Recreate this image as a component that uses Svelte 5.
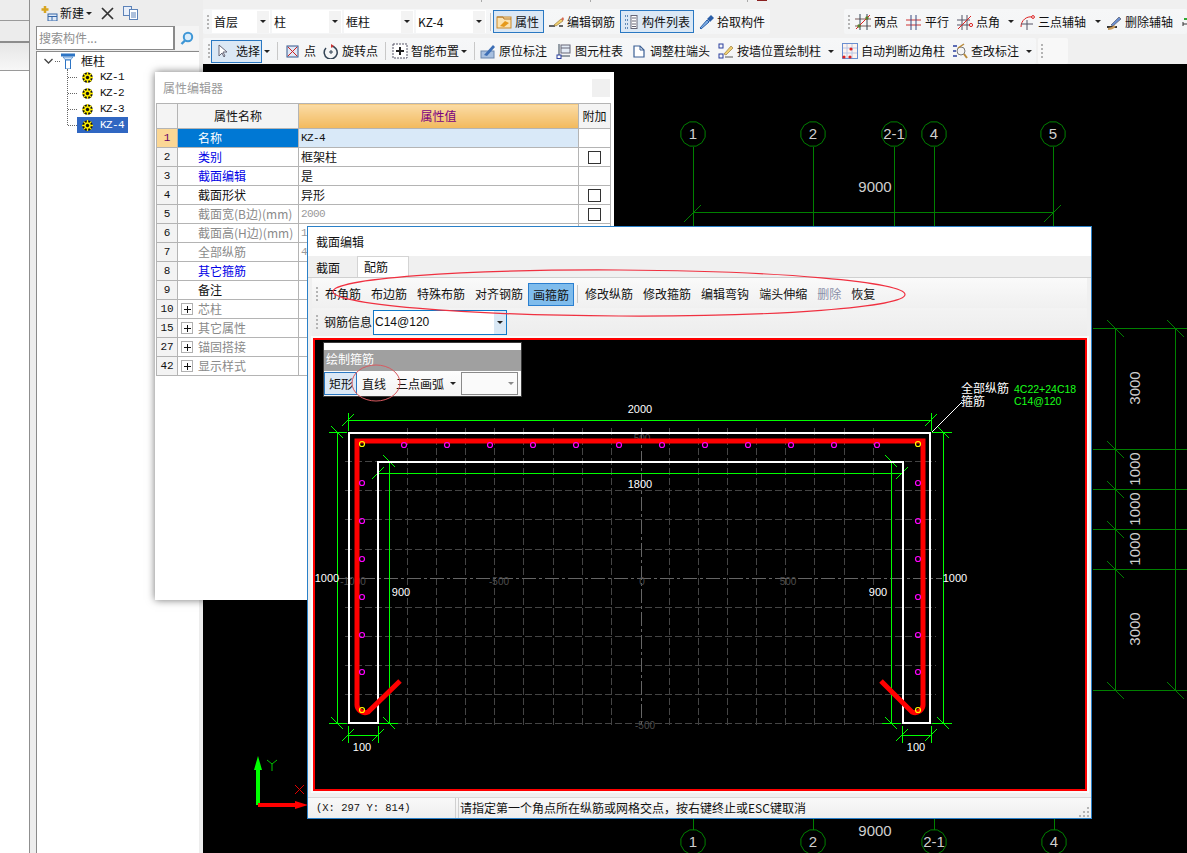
<script>
  const combos = [
    { t: '首层', w: 58 }, { t: '柱', w: 70 }, { t: '框柱', w: 70 }, { t: 'KZ-4', w: 70 }
  ];
  const row1a = [
    { i: 'prop', t: '属性', w: 51, on: true, ml: -1 },
    { i: 'edit', t: '编辑钢筋', w: 70, ml: 2 },
    { i: 'list', t: '构件列表', w: 74, on: true, ml: 4 },
    { i: 'pick', t: '拾取构件', w: 71, ml: 2 }
  ];
  const row1b = [
    { i: 'two', t: '两点', w: 51 },
    { i: 'par', t: '平行', w: 51 },
    { i: 'ang', t: '点角', w: 62, a: 1 },
    { i: 'arc', t: '三点辅轴', w: 87, a: 1 },
    { i: 'del', t: '删除辅轴', w: 76 },
    { i: 'dim', t: '', w: 12 }
  ];
  const row2 = [
    { i: 'pt', t: '点', w: 37, ml: 2 },
    { i: 'rot', t: '旋转点', w: 60, ml: 1 },
    { s: 1 },
    { i: 'smart', t: '智能布置', w: 80, a: 1, ml: 1 },
    { s: 1 },
    { i: 'orig', t: '原位标注', w: 73, ml: 0 },
    { i: 'tbl', t: '图元柱表', w: 72, ml: 3 },
    { i: 'adj', t: '调整柱端头', w: 84, ml: 3 },
    { i: 'wall', t: '按墙位置绘制柱', w: 121, a: 1, ml: 3 },
    { i: 'auto', t: '自动判断边角柱', w: 110, ml: 3 },
    { i: 'chk', t: '查改标注', w: 85, a: 1, ml: 0 }
  ];
  const rows = [
    { n: '1', name: '名称', val: 'KZ-4', cls: 'k', sel: true, mono: true },
    { n: '2', name: '类别', val: '框架柱', cls: 'b', box: true },
    { n: '3', name: '截面编辑', val: '是', cls: 'b' },
    { n: '4', name: '截面形状', val: '异形', cls: 'k', box: true },
    { n: '5', name: '截面宽(B边)(mm)', val: '2000', cls: 'g', box: true, small: true },
    { n: '6', name: '截面高(H边)(mm)', val: '1000', cls: 'g', box: true, small: true },
    { n: '7', name: '全部纵筋', val: '4C22+24C18', cls: 'g', small: true },
    { n: '8', name: '其它箍筋', val: '', cls: 'b' },
    { n: '9', name: '备注', val: '', cls: 'k' },
    { n: '10', name: '芯柱', val: '', cls: 'g', plus: true },
    { n: '15', name: '其它属性', val: '', cls: 'g', plus: true },
    { n: '27', name: '锚固搭接', val: '', cls: 'g', plus: true },
    { n: '42', name: '显示样式', val: '', cls: 'g', plus: true }
  ];
  const tree = ['KZ-1', 'KZ-2', 'KZ-3', 'KZ-4'];
  const dlgTools = ['布角筋', '布边筋', '特殊布筋', '对齐钢筋'];
  const dlgTools2 = ['修改纵筋', '修改箍筋', '编辑弯钩', '端头伸缩'];

  // background CAD drawing
  const axesTop = [[693, '1'], [813, '2'], [894, '2-1'], [934, '4'], [1053, '5']];
  const axesBot = [[693, '1'], [813, '2'], [934, '2-1'], [1054, '4']];
  const ring = (cx, cy, r) => {
    const p = [];
    for (let i = 0; i < 12; i++) {
      const a = Math.PI / 12 + (i * Math.PI) / 6;
      p.push((cx + r * Math.cos(a)).toFixed(1) + ',' + (cy + r * Math.sin(a)).toFixed(1));
    }
    return p.join(' ');
  };
  const sideY = [328, 449, 489, 529, 569, 690];
  const sideDims = [['3000', 388], ['1000', 469], ['1000', 509], ['1000', 549], ['3000', 629]];

  // section drawing
  const gridV = [];
  for (let x = 407; x <= 875; x += 29.1) if (Math.abs(x - 640) > 8) gridV.push(Math.round(x));
  const gridH = [461, 490, 519, 549, 607, 636, 665, 694, 723];
  const magTop = [404, 447, 490, 533, 576, 619, 662, 705, 748, 791, 834, 877];
  const magSide = [483, 521, 559, 597, 635, 672];
  const yellow = [[362, 444], [918, 444], [362, 710], [918, 710]];
  const dims = [
    [348, 420, 931, 420], [348, 413, 348, 431], [931, 413, 931, 431],
    [337, 432, 337, 723], [329, 432, 347, 432], [329, 723, 347, 723],
    [943, 432, 943, 723], [932, 432, 952, 432], [932, 723, 952, 723],
    [378, 473, 902, 473], [378, 462, 378, 481], [902, 462, 902, 481],
    [389, 461, 389, 723], [379, 461, 398, 461], [379, 723, 398, 723],
    [891, 461, 891, 723], [882, 461, 901, 461], [882, 723, 901, 723],
    [348, 735, 378, 735], [348, 726, 348, 743], [378, 726, 378, 743],
    [902, 735, 931, 735], [902, 726, 902, 743], [931, 726, 931, 743]
  ];
  const slashes = [[348, 420], [931, 420], [378, 473], [902, 473], [348, 735], [378, 735], [902, 735], [931, 735]];
  const backs = [[337, 432], [943, 432], [337, 723], [943, 723], [389, 461], [891, 461], [389, 723], [891, 723]];
  const dimText = [
    ['2000', 640, 413], ['1800', 640, 488], ['900', 401, 596], ['900', 878, 596],
    ['1000', 327, 582], ['1000', 955, 582], ['100', 362, 751], ['100', 916, 751]
  ];
  const axisText = [
    ['-1000', 353, 585], ['-500', 499, 585], ['0', 642, 585], ['500', 788, 585],
    ['500', 642, 442], ['-500', 645, 729]
  ];
</script>

{#snippet ico(n)}
  <svg class="ic" width="16" height="16" viewBox="0 0 16 16">
    {#if n === 'prop'}
      <rect x="1" y="3" width="14" height="11" fill="#fbe3b0" stroke="#c98a2e" />
      <path d="M1 3h6l1 2h7" fill="none" stroke="#b5782b" />
      <path d="M4 12l5-5 4 2-5 4z" fill="#e59a1c" />
    {:else if n === 'edit'}
      <path d="M1 12h6M11 12h4" stroke="#333" stroke-width="1.4" />
      <path d="M6 11l7-6 2 2-7 5z" fill="#f0d070" stroke="#8a6a2a" stroke-width=".6" />
      <path d="M13 5l2-2 1 2-1 2z" fill="#d86a50" />
    {:else if n === 'list'}
      <path d="M2 2h3M2 6h3M2 10h3M2 14h3" stroke="#3a6ea5" stroke-width="1.4" stroke-dasharray="1 1" />
      <rect x="8" y="1.5" width="6" height="13" fill="#fff" stroke="#667" />
      <path d="M9 4h4M9 7h4M9 10h4M9 12.500h4" stroke="#667" />
    {:else if n === 'pick'}
      <path d="M2 14l7-8 2 2-8 7z" fill="#7fb0e6" stroke="#2a5ea8" />
      <path d="M9 5l4-4 3 3-4 4z" fill="#2a5ea8" />
    {:else if n === 'two'}
      <path d="M0 5h16M0 12h16" stroke="#7a5a5a" /><path d="M5 0v16M12 0v16" stroke="#345" />
      <path d="M1 15L15 1" stroke="#d22" /><circle cx="4" cy="12" r="1.700" fill="#5a7d2a" /><circle cx="12" cy="4" r="1.700" fill="#5a7d2a" />
    {:else if n === 'par'}
      <path d="M0 6h15M0 11h15" stroke="#c33" /><path d="M5 1v15M10 1v15" stroke="#3a4a80" />
    {:else if n === 'ang'}
      <path d="M0 6h13M0 11h13" stroke="#556" /><path d="M5 1v15M10 1v15" stroke="#556" />
      <path d="M1 15L14 2" stroke="#d22" /><circle cx="14" cy="11" r="1.600" fill="none" stroke="#d22" />
    {:else if n === 'arc'}
      <path d="M2 13C2 6 8 2 13 3" fill="none" stroke="#d22" /><path d="M8 6v10M2 10h12" stroke="#556" />
      <circle cx="14" cy="3" r="1.400" fill="none" stroke="#d22" />
    {:else if n === 'del'}
      <path d="M1 13h10" stroke="#333" stroke-width="2" /><path d="M5 11l8-8 2 2-8 7z" fill="#6a8fd0" stroke="#445" stroke-width=".6" />
      <path d="M2 15c3 0 5-1 7-3" stroke="#c79a5a" stroke-width="2" fill="none" />
    {:else if n === 'dim'}
      <path d="M2 5h4" stroke="#3a3" stroke-width="2" /><path d="M1 10h7M1 8v4M8 8v4" stroke="#333" />
    {:else if n === 'sel'}
      <path d="M5 2v11l3-3 2 4 1-1-2-4h4z" fill="#fff" stroke="#667" />
    {:else if n === 'pt'}
      <rect x="2" y="3" width="11" height="11" fill="#dfe8f6" stroke="#34568c" />
      <path d="M3 4l9 9M12 4l-9 9" stroke="#c22" />
    {:else if n === 'rot'}
      <path d="M3 5a6.500 6.500 0 1 0 5-2" fill="none" stroke="#345" stroke-width="1.500" />
      <path d="M8 1v4l3-2z" fill="#c33" /><path d="M6 9h4M8 7v4" stroke="#345" />
    {:else if n === 'smart'}
      <rect x="1" y="1" width="14" height="14" fill="#fff" stroke="#556" stroke-dasharray="2 1" />
      <path d="M4 8h8M8 4v8" stroke="#222" stroke-width="2" />
    {:else if n === 'orig'}
      <rect x="1" y="8" width="13" height="7" fill="#a8c0e0" stroke="#6a86ad" />
      <path d="M4 12L13 2l2 2-8 9z" fill="#3d6eb5" />
    {:else if n === 'tbl'}
      <path d="M3 1v12h11" fill="none" stroke="#345" /><rect x="5" y="2" width="9" height="8" fill="#e4ecf7" stroke="#667" />
      <path d="M5 5h9" stroke="#667" /><rect x="1" y="12" width="4" height="3.500" fill="#fff" stroke="#2a3f9e" />
    {:else if n === 'adj'}
      <path d="M3 3h6l4 4v7H3z" fill="#fff" stroke="#3a5f94" stroke-width="1.200" /><path d="M9 3v4h4" fill="none" stroke="#3a5f94" />
    {:else if n === 'wall'}
      <rect x="1" y="1" width="4" height="4" fill="none" stroke="#2a3f9e" /><rect x="1" y="11" width="4" height="4" fill="none" stroke="#2a3f9e" />
      <path d="M7 14h8" stroke="#555" /><path d="M6 11l7-8 2 2-7 7z" fill="#f0d070" stroke="#8a6a2a" stroke-width=".6" />
    {:else if n === 'auto'}
      <rect x=".5" y=".5" width="15" height="15" fill="#fdf3ee" stroke="#6a8fd0" />
      <path d="M5 1v14M10 1v14M1 5h14M10 1v0M1 10h14" stroke="#b9c6e6" />
      <circle cx="2" cy="14" r="1.600" fill="#d22" /><circle cx="8" cy="14" r="1.600" fill="#d22" /><circle cx="9" cy="6" r="1.600" fill="#d22" />
    {:else if n === 'chk'}
      <path d="M1 3h4M1 8h3M1 13h4" stroke="#2a3f9e" stroke-width="1.500" />
      <circle cx="9" cy="8" r="4" fill="#f4f4f4" stroke="#777" /><path d="M12 11l3 4" stroke="#b98a3a" stroke-width="2" />
      <path d="M6 5l6-4" stroke="#b98a3a" stroke-width="1.500" />
    {/if}
  </svg>
{/snippet}

{#snippet gear()}
  <svg class="gear" width="11" height="11" viewBox="0 0 11 11">
    <circle cx="5.500" cy="5.500" r="5.200" fill="#111" />
    <path d="M5.500 0v11M0 5.500h11M1.600 1.600l7.800 7.800M9.400 1.600l-7.800 7.800" stroke="#ffee00" stroke-width="1.300" />
    <circle cx="5.500" cy="5.500" r="3.200" fill="#ffee00" />
    <circle cx="5.500" cy="5.500" r="1.700" fill="#111" />
  </svg>
{/snippet}

{#snippet arrow()}<i class="caret"></i>{/snippet}

{#snippet tool(it)}
  <div class="tool" class:on={it.on} style="width:{it.w}px;margin-left:{it.ml ?? 0}px">
    {@render ico(it.i)}
    {#if it.t}<span>{it.t}</span>{/if}
    {#if it.a}<span class="tool-caret">{@render arrow()}</span>{/if}
  </div>
{/snippet}

<div class="app">
  <aside class="nav">
    <div class="nav-a"></div>
    <div class="nav-b"></div>
    <div class="nav-c"></div>
    <div class="nav-d"></div>
  </aside>

  <section class="side">
    <div class="side-bar">
      <svg width="17" height="15" viewBox="0 0 17 15">
        <path d="M4 0v7M0.500 3.500h7" stroke="#d8a520" stroke-width="2.500" />
        <rect x="7" y="8" width="9" height="7" fill="#dfe9f6" stroke="#3566a8" />
        <path d="M7 10.500h9M11 10.500v4" stroke="#3566a8" />
      </svg>
      <span>新建</span>{@render arrow()}
      <svg class="x" width="13" height="13" viewBox="0 0 13 13"><path d="M1 1l11 11M12 1L1 12" stroke="#333" stroke-width="1.700" /></svg>
      <svg class="copy" width="15" height="14" viewBox="0 0 15 14">
        <rect x=".5" y=".5" width="8" height="9" fill="#e8effa" stroke="#5c82b8" />
        <rect x="6.500" y="3.500" width="8" height="10" fill="#fff" stroke="#5c82b8" />
        <path d="M8 7h5M8 9h5M8 11h5" stroke="#5c82b8" />
      </svg>
    </div>
    <div class="search">
      <div class="search-in">搜索构件...</div>
      <div class="search-btn">
        <svg width="14" height="14" viewBox="0 0 14 14"><circle cx="8" cy="6" r="4.200" fill="#d9ecfb" stroke="#3f97d6" stroke-width="2" /><path d="M5 9.500L1.500 13" stroke="#3f97d6" stroke-width="2.400" /></svg>
      </div>
    </div>
    <div class="tree">
      <div class="tree-root">
        <svg class="chev" width="9" height="6" viewBox="0 0 9 6"><path d="M.5 1l4 4 4-4" fill="none" stroke="#444" stroke-width="1.300" /></svg>
        <i class="dot-h short"></i>
        <svg width="14" height="16" viewBox="0 0 14 16">
          <path d="M0 .5h14v3H0z" fill="#2d74c4" /><path d="M2 4h10L9.500 7h-5z" fill="#cfe2f6" stroke="#2d74c4" stroke-width=".6" />
          <rect x="4.500" y="7" width="5" height="9" fill="#fff" stroke="#2d74c4" />
        </svg>
        <span>框柱</span>
      </div>
      <div class="tree-kids">
        {#each tree as k, i}
          <div class="tree-kid"><i class="dot-h"></i>
            <div class="kid-body" class:sel={i === 3}>{@render gear()}<span>{k}</span></div>
          </div>
        {/each}
      </div>
    </div>
  </section>

  <main class="main">
    <div class="strip">
      <i class="frag f1"></i><i class="frag f2"></i><i class="frag f3"></i><i class="frag f4"></i>
    </div>
    <div class="row r1">
      <div class="seg seg-a">
        <i class="handle"></i>
        <div class="combos">
          {#each combos as c}
            <div class="combo" style="width:{c.w}px"><span>{c.t}</span><b>{@render arrow()}</b></div>
          {/each}
        </div>
        <i class="sep"></i>
        {#each row1a as it}{@render tool(it)}{/each}
      </div>
      <div class="seg seg-b">
        <i class="handle"></i>
        {#each row1b as it}{@render tool(it)}{/each}
      </div>
    </div>
    <div class="row r2">
      <div class="seg seg-c">
        <i class="handle"></i>
        <div class="tool on sel-btn">{@render ico('sel')}<span>选择</span></div>
        <span class="lone-caret">{@render arrow()}</span>
        <i class="sep"></i>
        {#each row2 as it}
          {#if it.s}<i class="sep"></i>{:else}{@render tool(it)}{/if}
        {/each}
      </div>
      <div class="seg seg-d"><i class="handle"></i></div>
    </div>
    <div class="cad">
      <svg class="cad-svg" viewBox="203 64 984 789" width="984" height="789">
        <g stroke="#008000" fill="none" shape-rendering="crispEdges">
          {#each axesTop as a}<line x1={a[0]} y1="147" x2={a[0]} y2="227" />{/each}
          <line x1="693" y1="212" x2="1053" y2="212" />
          {#each axesBot as a}<line x1={a[0]} y1="819" x2={a[0]} y2="853" />{/each}
          {#each sideY as y}<line x1="1093" y1={y} x2="1187" y2={y} />{/each}
          <line x1="1115" y1="328" x2="1115" y2="690" />
          <line x1="1175" y1="328" x2="1175" y2="690" />
        </g>
        <g stroke="#008000" fill="none">
          {#each axesTop as a}<polygon points={ring(a[0], 134, 12.5)} fill="#000" />{/each}
          {#each axesBot as a}<polygon points={ring(a[0], 842, 12.5)} fill="#000" />{/each}
          <path d="M684 222l17-17M1044 222l17-17" />
          {#each sideY as y}<path d="M1107 {y - 8}l17 17" />{/each}
          <path d="M1167 320l17 17M1167 682l17 17" />
        </g>
        <g class="cad-t">
          {#each axesTop as a}<text x={a[0]} y="139" text-anchor="middle">{a[1]}</text>{/each}
          {#each axesBot as a}<text x={a[0]} y="847" text-anchor="middle">{a[1]}</text>{/each}
          <text x="875" y="192" text-anchor="middle">9000</text>
          <text x="875" y="836" text-anchor="middle">9000</text>
          {#each sideDims as d}
            <text transform="translate(1140 {d[1]}) rotate(-90)" text-anchor="middle">{d[0]}</text>
          {/each}
        </g>
        <path d="M258 805V766" stroke="#00ff00" stroke-width="4" />
        <path d="M258 756l-4 14h8z" fill="#00ff00" />
        <path d="M258 805H296" stroke="#ff0000" stroke-width="4" />
        <path d="M295 801l13 4-13 4z" fill="#ff0000" />
        <path d="M267 760l5 4 5-4M272 764v7" stroke="#00c000" fill="none" />
        <path d="M295 785l9 9M304 785l-9 9" stroke="#e00000" />
      </svg>
    </div>
  </main>

  <div class="propwin">
    <div class="prop-title"><span>属性编辑器</span><i class="prop-x"></i></div>
    <table class="grid">
      <colgroup><col class="c0" /><col class="c1" /><col class="c2" /><col class="c3" /></colgroup>
      <thead>
        <tr><th class="idx"></th><th>属性名称</th><th class="valh">属性值</th><th>附加</th></tr>
      </thead>
      <tbody>
        {#each rows as r}
          <tr>
            <td class="idx" class:cur={r.sel}>{r.n}</td>
            <td class="name {r.cls}" class:selname={r.sel} class:withplus={r.plus}>
              {#if r.plus}<i class="plus"></i>{/if}{r.name}
            </td>
            <td class="val" class:selval={r.sel} class:mono={r.mono} class:small={r.small}>{r.val}</td>
            <td class="att">{#if r.box}<i class="check"></i>{/if}</td>
          </tr>
        {/each}
      </tbody>
    </table>
  </div>

  <div class="dlg">
    <div class="dlg-title">截面编辑</div>
    <div class="tabs">
      <div class="tab">截面</div>
      <div class="tab active">配筋</div>
    </div>
    <div class="dlg-tools t1">
      <i class="handle"></i>
      {#each dlgTools as t}<span class="dt">{t}</span>{/each}
      <span class="dt pressed">画箍筋</span>
      <i class="sep"></i>
      {#each dlgTools2 as t}<span class="dt">{t}</span>{/each}
      <span class="dt dis">删除</span>
      <span class="dt">恢复</span>
    </div>
    <div class="dlg-tools t2">
      <i class="handle"></i>
      <span class="dt">钢筋信息</span>
      <div class="rebar"><span>C14@120</span><b>{@render arrow()}</b></div>
    </div>
    <div class="sec">
      <svg class="sec-svg" viewBox="315 340 770 449" width="770" height="449">
        <g shape-rendering="crispEdges">
          <g stroke="#444" stroke-dasharray="7 3" fill="none">
            {#each gridV as x}<line x1={x} y1="428" x2={x} y2="727" />{/each}
            {#each gridH as y}<line x1="345" y1={y} x2="936" y2={y} />{/each}
          </g>
          <g stroke="#666" stroke-dasharray="14 3 3 3" fill="none">
            <line x1="641" y1="428" x2="641" y2="727" />
            <line x1="338" y1="578" x2="942" y2="578" />
          </g>
        </g>
        <g class="ax">
          {#each axisText as t}<text x={t[1]} y={t[2]} text-anchor="middle">{t[0]}</text>{/each}
        </g>
        <g stroke="#00ff00" fill="none" shape-rendering="crispEdges">
          {#each dims as d}<line x1={d[0]} y1={d[1]} x2={d[2]} y2={d[3]} />{/each}
        </g>
        <g stroke="#00ff00" fill="none">
          {#each slashes as s}<path d="M{s[0] - 6} {s[1] + 6}l12 -12" />{/each}
          {#each backs as s}<path d="M{s[0] - 6} {s[1] - 6}l12 12" />{/each}
        </g>
        <path d="M378 723H349V433H930V723H903V462H378z" fill="none" stroke="#fff" stroke-width="2" shape-rendering="crispEdges" />
        <path d="M400 681L368 712A8 8 0 0 1 357 704V441H923V704A8 8 0 0 1 912 712L881 681" fill="none" stroke="#ff0000" stroke-width="5" />
        <g fill="none" stroke="#ff00ff" stroke-width="1.200">
          {#each magTop as x}<circle cx={x} cy="445" r="2.500" />{/each}
          {#each magSide as y}
            <circle cx="362" cy={y} r="2.500" />
            <circle cx="918" cy={y} r="2.500" />
          {/each}
        </g>
        <g fill="none" stroke="#ffff00" stroke-width="1.200">
          {#each yellow as p}<circle cx={p[0]} cy={p[1]} r="2.500" />{/each}
        </g>
        <path d="M932 432L962 402" stroke="#fff" fill="none" />
        <g class="wt">
          {#each dimText as t}<text x={t[1]} y={t[2]} text-anchor="middle">{t[0]}</text>{/each}
          <text class="zh" x="961" y="393">全部纵筋</text>
          <text class="zh" x="961" y="406">箍筋</text>
        </g>
        <g class="gt">
          <text x="1014" y="393">4C22+24C18</text>
          <text x="1014" y="405">C14@120</text>
        </g>
      </svg>
      <div class="mini">
        <div class="mini-top"></div>
        <div class="mini-title">绘制箍筋</div>
        <div class="mini-tools">
          <span class="m-btn">矩形</span>
          <span class="m-t line">直线</span>
          <span class="m-t arc3">三点画弧</span>
          <span class="m-caret">{@render arrow()}</span>
          <div class="m-combo"><i class="caret gray"></i></div>
        </div>
      </div>
    </div>
    <div class="status">
      <div class="st-l">(X: 297 Y: 814)</div>
      <div class="st-r">请指定第一个角点所在纵筋或网格交点，按右键终止或ESC键取消
        <svg class="grip" width="11" height="11" viewBox="0 0 11 11" fill="#b5b5b5">
          <rect x="8" y="1" width="2" height="2" /><rect x="4" y="5" width="2" height="2" /><rect x="8" y="5" width="2" height="2" />
          <rect x="0" y="9" width="2" height="2" /><rect x="4" y="9" width="2" height="2" /><rect x="8" y="9" width="2" height="2" />
        </svg>
      </div>
    </div>
  </div>

  <svg class="marks" width="1187" height="853" viewBox="0 0 1187 853">
    <ellipse cx="619" cy="293" rx="286" ry="23" fill="none" stroke="#f03040" stroke-width="1.200" transform="rotate(0.300 619 293)" />
    <ellipse cx="376" cy="383" rx="24" ry="18" fill="none" stroke="#d85a60" />
  </svg>
</div>

<style>
  :global(body) {
    margin: 0;
    background: #f0f0f0;
  }
  .app {
    position: relative;
    display: flex;
    width: 1187px;
    height: 853px;
    overflow: hidden;
    background: #f0f0f0;
    font: 12px/16px "Noto Sans CJK SC", "Liberation Sans", sans-serif;
    color: #111;
  }
  i { display: block; font-style: normal; }

  /* left rail */
  .nav {
    width: 29px;
    flex: none;
    display: flex;
    flex-direction: column;
    border-right: 1px solid #8f8f8f;
    box-sizing: content-box;
  }
  .nav-a { height: 20px; background: #ededed; border-bottom: 1px solid #9a9a9a; }
  .nav-b { height: 20px; background: #ececec; border-bottom: 2px solid #8c8c8c; }
  .nav-c { height: 27px; background: linear-gradient(#e6e6e6, #f7f7f7); border-bottom: 1px solid #9a9a9a; }
  .nav-d { flex: 1; background: #fff; }

  /* tree side panel */
  .side {
    width: 173px;
    flex: none;
    box-sizing: border-box;
    padding: 0 4px 0 6px;
    display: flex;
    flex-direction: column;
    background: #ededed;
  }
  .side-bar {
    height: 26px;
    display: flex;
    align-items: center;
    padding-left: 5px;
    box-sizing: border-box;
    font-size: 12px;
    gap: 2px;
  }
  .side-bar .x { margin-left: 7px; }
  .side-bar .copy { margin-left: 7px; }
  .search { display: flex; height: 25px; }
  .search-in {
    width: 139px;
    height: 24px;
    box-sizing: border-box;
    border: 1px solid #8a8a8a;
    border-right-width: 2px;
    background: #fff;
    color: #8f8f8f;
    padding: 3px 2px;
  }
  .search-btn {
    width: 24px;
    height: 24px;
    display: flex;
    align-items: center;
    justify-content: center;
    background: #f4f4f4;
  }
  .tree {
    flex: 1;
    background: #fff;
    border-left: 1px solid #8a8a8a;
    border-top: 1px solid #8a8a8a;
    padding: 1px 0 0 7px;
  }
  .tree-root { display: flex; align-items: center; height: 16px; }
  .tree-root span { margin-left: 6px; line-height: 16px; }
  .dot-h { width: 9px; height: 0; border-top: 1px dotted #666; flex: none; }
  .dot-h.short { width: 5px; margin: 0 1px 0 2px; }
  .tree-kids { margin-left: 23px; border-left: 1px dotted #666; height: 56px; }
  .tree-kid { display: flex; align-items: center; height: 16px; }
  .kid-body {
    display: flex;
    align-items: center;
    height: 16px;
    width: 51px;
    padding-left: 5px;
    box-sizing: border-box;
    font: 11px/16px "Liberation Mono", monospace;
    letter-spacing: -.6px;
    flex: none;
  }
  .kid-body span { margin-left: 7px; }
  .kid-body.sel { background: #3067c2; color: #fff; }
  .gear { flex: none; }

  /* main */
  .main {
    flex: 1;
    min-width: 0;
    display: flex;
    flex-direction: column;
  }
  .strip { height: 9px; display: flex; background: #f0f0f0; }
  .frag { width: 1px; height: 2px; background: #aaa; }
  .frag.f1 { margin-left: 278px; }
  .frag.f2 { margin-left: 108px; }
  .frag.f3 { margin-left: 156px; }
  .frag.f4 { width: 10px; background: #8a2020; margin-left: 9px; height: 1px; }
  .row { display: flex; flex: none; }
  .r1 { height: 25px; margin-bottom: 4px; justify-content: space-between; }
  .r2 { height: 26px; gap: 2px; }
  .seg {
    display: flex;
    align-items: center;
    background: linear-gradient(#f6f7f8, #f4f5f6);
    border-radius: 2px;
    box-sizing: border-box;
  }
  .seg-a { width: 567px; padding-left: 4px; }
  .seg-b { width: 343px; padding-left: 4px; }
  .seg-c { width: 833px; padding-left: 5px; }
  .seg-d { width: 30px; padding-left: 3px; background: #f8f8f8; }
  .handle {
    width: 2px;
    height: 14px;
    flex: none;
    background: repeating-linear-gradient(#b4b4b4 0 2px, transparent 2px 4px);
  }
  .seg-a > .handle { margin-right: 3px; }
  .seg-b > .handle { margin-right: 3px; }
  .seg-c > .handle { margin-right: 1px; }
  .combos { display: flex; gap: 2px; }
  .combo {
    height: 23px;
    background: #fff;
    display: flex;
    align-items: center;
    justify-content: space-between;
    padding-left: 2px;
    box-sizing: border-box;
  }
  .combo b {
    width: 12px;
    height: 22px;
    background: #f3f3f3;
    display: flex;
    align-items: center;
    justify-content: center;
    margin-right: 1px;
  }
  .sep { width: 1px; height: 18px; background: #c8c8c8; flex: none; margin: 0 3px 0 4px; }
  .caret {
    width: 0;
    height: 0;
    border: 3px solid transparent;
    border-top: 3px solid #222;
    border-bottom: 0;
    flex: none;
  }
  .caret.gray { border-top-color: #8a8a8a; }
  .tool {
    display: flex;
    align-items: center;
    height: 23px;
    box-sizing: border-box;
    flex: none;
    padding-left: 2px;
    position: relative;
    white-space: nowrap;
  }
  .tool .ic { flex: none; margin-right: 3px; }
  .tool.on { background: #dbe8f5; border: 1px solid #2a78c2; padding-left: 2px; }
  .tool-caret { position: absolute; right: 3px; top: 10px; }
  .sel-btn { width: 51px; }
  .sel-btn .ic { margin-right: 6px; }
  .lone-caret { width: 10px; display: flex; justify-content: center; margin-right: 1px; }
  .cad { flex: 1; background: #000; min-height: 0; }
  .cad-svg { display: block; }
  .cad-t text { font: 15px "Liberation Sans", sans-serif; fill: #cfcfcf; }

  /* property window */
  .propwin {
    position: absolute;
    left: 155px;
    top: 72px;
    width: 459px;
    height: 528px;
    background: #fff;
    box-shadow: 0 0 8px rgba(0, 0, 0, .55);
  }
  .prop-title {
    height: 31px;
    display: flex;
    align-items: center;
    justify-content: space-between;
    padding: 0 4px 0 8px;
    color: #9a9a9a;
  }
  .prop-x { width: 18px; height: 18px; background: #f0f0f0; }
  .grid {
    border-collapse: collapse;
    table-layout: fixed;
    width: 454px;
    margin-left: 1px;
  }
  .c0 { width: 21px; }
  .c1 { width: 121px; }
  .c2 { width: 280px; }
  .c3 { width: 32px; }
  .grid th, .grid td {
    border: 1px solid #b4b4b4;
    padding: 0;
    height: 18px;
    line-height: 16px;
    overflow: hidden;
    white-space: nowrap;
  }
  .grid th { height: 24px; font-weight: 400; background: #f4f4f4; }
  .grid th.valh { background: linear-gradient(#fbdca6, #f2b95c); color: #7a0080; }
  .idx {
    text-align: center;
    background: #f3f3f3;
    font: 400 11px/16px "Liberation Mono", monospace;
  }
  .idx.cur { background: #fbd795; color: #660066; }
  .name { padding-left: 20px !important; }
  .name.b { color: #0000e6; }
  .name.g { color: #8a8a8a; }
  .name.k { color: #111; }
  .name.selname { background: #0078d4; color: #fff; }
  .name.withplus { padding-left: 2px !important; }
  .plus {
    display: inline-block;
    width: 10px;
    height: 10px;
    border: 1px solid #b0b0b0;
    margin: 2px 5px 0 1px;
    vertical-align: top;
    background:
      linear-gradient(#111, #111) center / 7px 1px no-repeat,
      linear-gradient(#111, #111) center / 1px 7px no-repeat;
  }
  .val { padding-left: 2px !important; }
  .val.selval { background: #d9e9f8; }
  .val.mono { font: 11px/16px "Liberation Mono", monospace; letter-spacing: -.6px; }
  .val.small { color: #9a9a9a; font: 11px/16px "Liberation Mono", monospace; letter-spacing: -.6px; }
  .att { text-align: center; }
  .check {
    display: inline-block;
    width: 11px;
    height: 11px;
    border: 1px solid #333;
    vertical-align: -2px;
    background: #fff;
  }

  /* section dialog */
  .dlg {
    position: absolute;
    left: 307px;
    top: 226px;
    width: 785px;
    height: 593px;
    box-sizing: border-box;
    border: 1px solid #2a80c8;
    background: #f0f0f0;
    display: flex;
    flex-direction: column;
  }
  .dlg-title { height: 29px; background: #fff; padding: 7px 0 0 8px; box-sizing: border-box; flex: none; }
  .tabs {
    height: 22px;
    box-sizing: border-box;
    display: flex;
    align-items: flex-end;
    padding-left: 2px;
    flex: none;
    border-bottom: 1px solid #d0d0d0;
  }
  .tab { width: 47px; height: 19px; padding-left: 6px; box-sizing: border-box; line-height: 20px; background: #f0f0f0; }
  .tab.active {
    width: 52px;
    height: 21px;
    background: #fff;
    border: 1px solid #d4d4d4;
    border-bottom: 0;
    padding-left: 6px;
    line-height: 19px;
  }
  .dlg-tools {
    display: flex;
    align-items: center;
    flex: none;
    margin: 0 4px;
    background: linear-gradient(#fafafa, #f0f0f0);
    padding-left: 4px;
    box-sizing: border-box;
  }
  .dlg-tools.t1 { height: 30px; gap: 10px; padding-top: 2px; }
  .dlg-tools.t2 { height: 28px; background: linear-gradient(#f3f3f3, #ededed); }
  .dlg-tools .handle { margin-right: -3px; }
  .dlg-tools.t2 .handle { margin-right: 6px; }
  .dlg-tools.t1 .sep { margin: 0 -3px 0 -7px; }
  .dt { white-space: nowrap; flex: none; }
  .dt.pressed {
    background: #7fbcec;
    border: 1px solid #2a7fd0;
    padding: 3px 4px;
    margin-left: -5px;
    line-height: 15px;
  }
  .dt.dis { color: #8a8fa8; }
  .rebar {
    width: 134px;
    height: 25px;
    margin-left: 1px;
    box-sizing: border-box;
    border: 1px solid #0f78c8;
    background: #fff;
    display: flex;
    justify-content: space-between;
    align-items: center;
    padding-left: 1px;
    font: 12px "Liberation Sans", sans-serif;
  }
  .rebar b {
    width: 12px;
    height: 23px;
    background: #d9e8f5;
    display: flex;
    align-items: center;
    justify-content: center;
  }
  .sec {
    position: relative;
    margin: 2px 0 0 5px;
    width: 774px;
    height: 453px;
    box-sizing: border-box;
    border: 2px solid #ff0000;
    box-shadow: 0 0 0 2px #fafafa;
    background: #000;
    flex: none;
  }
  .sec-svg { display: block; }
  .ax text { font: 10px "Liberation Sans", sans-serif; fill: #4d4d4d; }
  .wt text { font: 11px "Liberation Sans", sans-serif; fill: #fff; }
  .wt text.zh { font: 12px "Noto Sans CJK SC", sans-serif; }
  .gt text { font: 10.500px "Liberation Sans", sans-serif; fill: #19ff19; }
  .mini {
    position: absolute;
    left: 8px;
    top: 2px;
    width: 199px;
    height: 55px;
    box-sizing: border-box;
    border: 1px solid #3a3a3a;
    background: #f6f6f6;
  }
  .mini-top { height: 7px; background: #fff; }
  .mini-title { height: 21px; background: #a0a0a0; color: #fff; padding: 1px 0 0 2px; box-sizing: border-box; }
  .mini-tools { display: flex; align-items: center; height: 25px; background: linear-gradient(#fdfdfd, #f3f3f3); }
  .m-btn {
    width: 33px;
    height: 23px;
    box-sizing: border-box;
    background: #dbe8f5;
    border: 1px solid #2a78c2;
    padding: 3px 0 0 4px;
    white-space: nowrap;
    overflow: hidden;
    flex: none;
  }
  .m-t { white-space: nowrap; }
  .m-t.line { margin-left: 5px; }
  .m-t.arc3 { margin-left: 10px; }
  .m-caret { margin-left: 6px; width: 6px; }
  .m-combo {
    margin-left: 5px;
    width: 57px;
    height: 23px;
    box-sizing: border-box;
    border: 1px solid #8a8a8a;
    background: #fafafa;
    display: flex;
    align-items: center;
    justify-content: flex-end;
    padding-right: 3px;
  }
  .status {
    margin-top: 6px;
    flex: 1;
    display: flex;
    gap: 2px;
    border-top: 1px solid #d8d8d8;
    background: linear-gradient(#f9f9f9, #efefef);
    min-height: 0;
  }
  .st-l {
    width: 148px;
    box-sizing: border-box;
    border-right: 1px solid #d0d0d0;
    padding: 1px 0 0 8px;
    font: 10.500px/18px "Liberation Mono", monospace;
  }
  .st-r {
    flex: 1;
    position: relative;
    border-left: 1px solid #d0d0d0;
    padding: 1px 0 0 1px;
    line-height: 18px;
  }
  .grip { position: absolute; right: 1px; bottom: 1px; }
  .marks { position: absolute; left: 0; top: 0; pointer-events: none; }
</style>
